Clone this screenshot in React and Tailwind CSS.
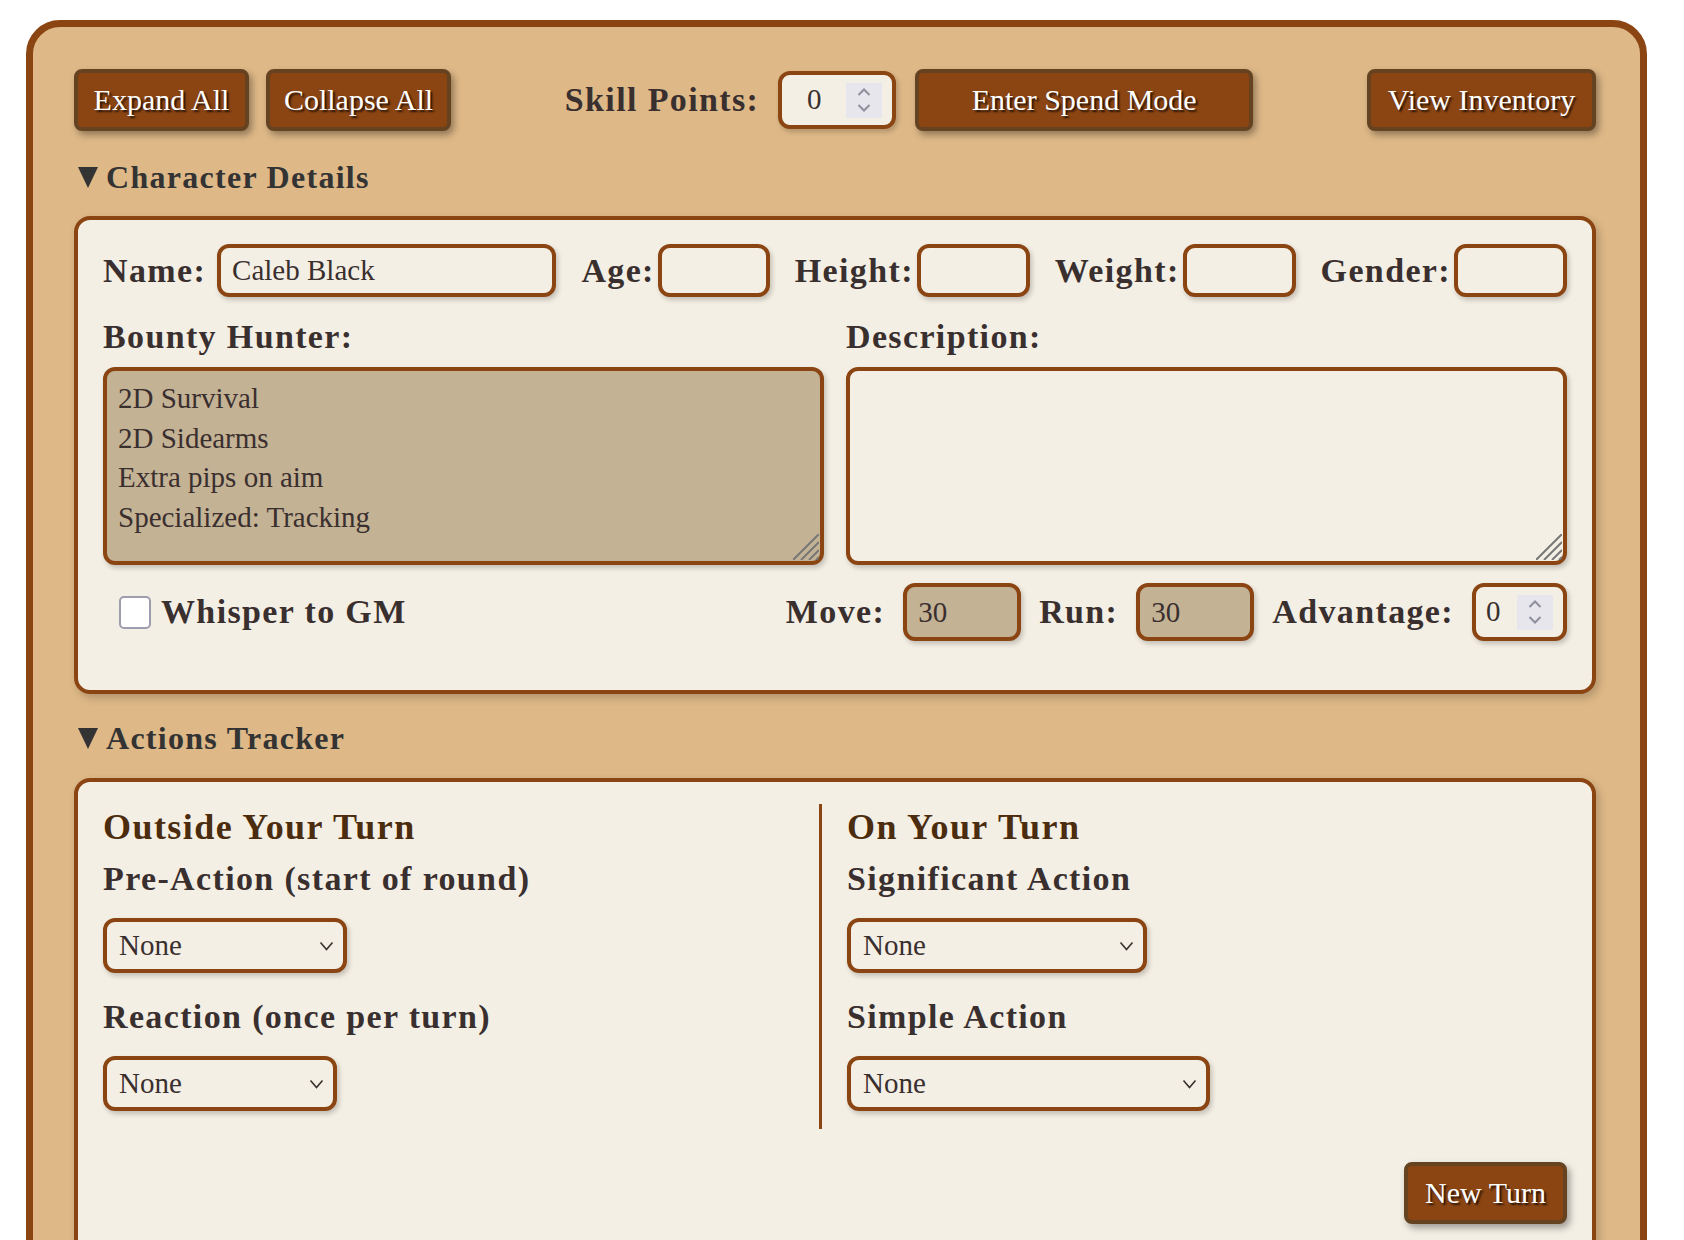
import React from 'react';

const Btn = ({ children, className = '' }) => (
  <button
    className={`h-[62px] shrink-0 rounded-[8px] border-4 border-[#654321] bg-[#8b4513] text-[30px] leading-none text-white [text-shadow:2px_2px_2px_rgba(0,0,0,0.75)] shadow-[3px_4px_7px_rgba(0,0,0,0.35)] ${className}`}
  >
    {children}
  </button>
);

const Label = ({ children, className = '' }) => (
  <span className={`shrink-0 text-[34px] font-bold leading-[40px] tracking-[0.04em] ${className}`}>{children}</span>
);

const Field = ({ value = '', tan = false, className = '' }) => (
  <input
    defaultValue={value}
    className={`rounded-[12px] border-4 border-[#8b4513] px-[11px] text-[29px] text-[#3a2f2f] shadow-[2px_3px_5px_rgba(0,0,0,0.2)] outline-none ${tan ? 'bg-[#c4b294]' : 'bg-[#f4efe4]'} ${className}`}
  />
);

const Spinner = () => (
  <div className="mr-[10px] flex h-[35px] w-[36px] shrink-0 flex-col items-center justify-center gap-[8px] bg-[#e6e6ec]">
    <svg width="14" height="8" viewBox="0 0 14 8">
      <path d="M1.5 7 7 1.5 12.5 7" fill="none" stroke="#8e8e9c" strokeWidth="2" />
    </svg>
    <svg width="14" height="8" viewBox="0 0 14 8">
      <path d="M1.5 1 7 6.5 12.5 1" fill="none" stroke="#8e8e9c" strokeWidth="2" />
    </svg>
  </div>
);

const NumBox = ({ center = false, className = '' }) => (
  <div
    className={`flex shrink-0 items-center rounded-[12px] border-4 border-[#8b4513] bg-[#f4efe4] shadow-[2px_3px_5px_rgba(0,0,0,0.2)] ${className}`}
  >
    <input
      defaultValue="0"
      className={`w-0 flex-1 bg-transparent text-[29px] text-[#3a2f2f] outline-none ${center ? 'text-center' : 'pl-[10px]'}`}
    />
    <Spinner />
  </div>
);

const Select = ({ className = '' }) => (
  <div className={`relative h-[55px] ${className}`}>
    <select className="h-full w-full appearance-none rounded-[12px] border-4 border-[#8b4513] bg-[#f4efe4] pl-[12px] text-[29px] text-[#3a2f2f] shadow-[2px_3px_5px_rgba(0,0,0,0.2)] outline-none">
      <option>None</option>
    </select>
    <svg
      className="pointer-events-none absolute right-[13px] top-1/2 -translate-y-1/2"
      width="15"
      height="10"
      viewBox="0 0 15 10"
    >
      <path d="M1.5 1.5 7.5 8.5l6-7" fill="none" stroke="#3a2f2f" strokeWidth="1.6" />
    </svg>
  </div>
);

// textarea with the drawn resize grip in the corner
const Area = ({ value = '', tan = false }) => (
  <div className="relative mt-[10px] h-[198px]">
    <textarea
      defaultValue={value}
      className={`block h-full w-full resize-none rounded-[12px] border-4 border-[#8b4513] px-[11px] pt-[8px] text-[29px] leading-[39.5px] text-[#3a2f2f] shadow-[2px_3px_5px_rgba(0,0,0,0.2)] outline-none ${tan ? 'bg-[#c4b294]' : 'bg-[#f4efe4]'}`}
    />
    <svg className="pointer-events-none absolute bottom-[5px] right-[5px]" width="26" height="26" viewBox="0 0 26 26">
      <path d="M26 0 0 26M26 8 8 26M26 16 16 26M26 23l-3 3" stroke="#777" strokeWidth="2" />
    </svg>
  </div>
);

const SectionTitle = ({ children, className = '' }) => (
  <div className={`flex h-[40px] items-center text-[32px] font-bold tracking-[0.04em] text-[#333] ${className}`}>
    <svg className="ml-[4px] mr-[8px]" width="20" height="21" viewBox="0 0 20 21">
      <path d="M0 0h20L10 21z" fill="#333" />
    </svg>
    {children}
  </div>
);

const ActionColumn = ({ title, first, firstW, second, secondW, className = '' }) => (
  <div className={`pb-[18px] ${className}`}>
    <div className="flex h-[46px] items-center text-[36px] font-bold tracking-[0.04em] text-[#4b2c0e]">{title}</div>
    <div className="mt-[9px]">
      <Label>{first}</Label>
    </div>
    <Select className={`mt-[19px] ${firstW}`} />
    <div className="mt-[24px]">
      <Label>{second}</Label>
    </div>
    <Select className={`mt-[19px] ${secondW}`} />
  </div>
);

export default function App() {
  return (
    <div className="min-h-screen bg-white pt-[20px] font-['Liberation_Serif',serif] text-[#3a2f2f]">
      <div className="ml-[26px] w-[1621px] rounded-[34px] border-[7px] border-[#8b4513] bg-[#deb887] pb-[60px] pl-[41px] pr-[44px] pt-[42px]">
        {/* Top toolbar */}
        <div className="flex items-center justify-between">
          <div className="flex gap-[17px]">
            <Btn className="w-[175px]">Expand All</Btn>
            <Btn className="w-[185px]">Collapse All</Btn>
          </div>
          <div className="flex items-center">
            <Label>Skill Points:</Label>
            <NumBox center className="ml-[19px] h-[58px] w-[118px]" />
            <Btn className="ml-[19px] w-[338px]">Enter Spend Mode</Btn>
          </div>
          <Btn className="w-[229px]">View Inventory</Btn>
        </div>

        {/* Character Details */}
        <SectionTitle className="mt-[26px]">Character Details</SectionTitle>
        <div className="mt-[19px] rounded-[16px] border-4 border-[#8b4513] bg-[#f4efe4] px-[25px] pb-[49px] pt-[24px] shadow-[3px_4px_8px_rgba(0,0,0,0.2)]">
          <div className="flex h-[53px] items-center gap-[25px]">
            <div className="flex h-full flex-1 items-center">
              <Label>Name:</Label>
              <Field value="Caleb Black" className="ml-[11px] h-full w-0 flex-1" />
            </div>
            <div className="flex h-full items-center">
              <Label>Age:</Label>
              <Field className="ml-[3px] h-full w-[112px]" />
            </div>
            <div className="flex h-full items-center">
              <Label>Height:</Label>
              <Field className="ml-[3px] h-full w-[113px]" />
            </div>
            <div className="flex h-full items-center">
              <Label>Weight:</Label>
              <Field className="ml-[3px] h-full w-[113px]" />
            </div>
            <div className="flex h-full items-center">
              <Label>Gender:</Label>
              <Field className="ml-[3px] h-full w-[113px]" />
            </div>
          </div>

          <div className="mt-[20px] grid grid-cols-2 gap-[22px]">
            <div>
              <Label>Bounty Hunter:</Label>
              <Area tan value={'2D Survival\n2D Sidearms\nExtra pips on aim\nSpecialized: Tracking'} />
            </div>
            <div>
              <Label>Description:</Label>
              <Area />
            </div>
          </div>

          <div className="mt-[18px] flex h-[58px] items-center justify-between">
            <label className="ml-[16px] flex items-center">
              <input
                type="checkbox"
                className="h-[33px] w-[32px] appearance-none rounded-[5px] border-2 border-[#9d9dae] bg-white"
              />
              <Label className="ml-[10px]">Whisper to GM</Label>
            </label>
            <div className="flex h-full items-center gap-[18px]">
              <Label>Move:</Label>
              <Field tan value="30" className="h-full w-[118px]" />
              <Label>Run:</Label>
              <Field tan value="30" className="h-full w-[118px]" />
              <Label>Advantage:</Label>
              <NumBox className="h-full w-[95px]" />
            </div>
          </div>
        </div>

        {/* Actions Tracker */}
        <SectionTitle className="mt-[24px]">Actions Tracker</SectionTitle>
        <div className="mt-[20px] rounded-[16px] border-4 border-[#8b4513] bg-[#f4efe4] px-[25px] pb-[40px] pt-[22px] shadow-[3px_4px_8px_rgba(0,0,0,0.2)]">
          <div className="flex">
            <ActionColumn
              className="w-[716px]"
              title="Outside Your Turn"
              first="Pre-Action (start of round)"
              firstW="w-[244px]"
              second="Reaction (once per turn)"
              secondW="w-[234px]"
            />
            <ActionColumn
              className="flex-1 border-l-[3px] border-[#8b4513] pl-[25px]"
              title="On Your Turn"
              first="Significant Action"
              firstW="w-[300px]"
              second="Simple Action"
              secondW="w-[363px]"
            />
          </div>
          <div className="mt-[33px] flex justify-end">
            <Btn className="w-[163px]">New Turn</Btn>
          </div>
        </div>
      </div>
    </div>
  );
}
